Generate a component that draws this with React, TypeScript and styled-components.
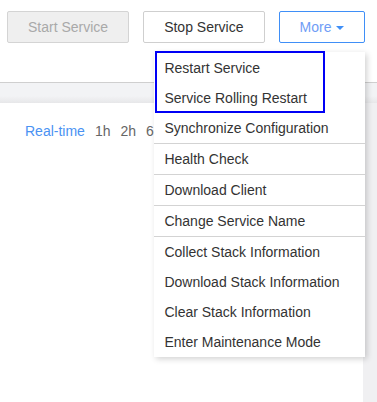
import React from "react";
import styled, { createGlobalStyle } from "styled-components";

const GlobalStyle = createGlobalStyle`
  html, body {
    margin: 0;
    padding: 0;
    background: #fff;
    font-family: "Liberation Sans", Arial, sans-serif;
    font-size: 14px;
    color: #333;
  }
  #root { height: 402px; }
`;

const menuItems: { label: string; divider?: boolean }[] = [
  { label: "Restart Service" },
  { label: "Service Rolling Restart" },
  { label: "Synchronize Configuration", divider: true },
  { label: "Health Check", divider: true },
  { label: "Download Client", divider: true },
  { label: "Change Service Name", divider: true },
  { label: "Collect Stack Information" },
  { label: "Download Stack Information" },
  { label: "Clear Stack Information" },
  { label: "Enter Maintenance Mode" },
];

const ranges = ["1h", "2h", "6h"];

export default function App() {
  return (
    <Page>
      <GlobalStyle />
      <Toolbar>
        <Button disabled>Start Service</Button>
        <Button>Stop Service</Button>
        <MoreWrap>
          <Button $primary>
            More
            <Caret />
          </Button>
          <Menu>
            <Highlight />
            {menuItems.map((item) => (
              <MenuItem key={item.label} $divider={item.divider}>
                {item.label}
              </MenuItem>
            ))}
          </Menu>
        </MoreWrap>
      </Toolbar>
      <Body>
        <Panel>
          <TimeRow>
            <TimeLink $active>Real-time</TimeLink>
            {ranges.map((r) => (
              <TimeLink key={r}>{r}</TimeLink>
            ))}
          </TimeRow>
        </Panel>
      </Body>
    </Page>
  );
}

const Page = styled.div`
  height: 402px;
  display: flex;
  flex-direction: column;
  overflow: hidden;
`;

const Toolbar = styled.div`
  height: 82px;
  box-sizing: border-box;
  padding: 11px 7px 0;
  display: flex;
  align-items: flex-start;
  gap: 14px;
  position: relative;
  z-index: 2;
`;

const Button = styled.button<{ $primary?: boolean }>`
  height: 32px;
  box-sizing: border-box;
  padding: 0 20px;
  display: flex;
  align-items: center;
  gap: 5px;
  font-family: "Liberation Sans", Arial, sans-serif;
  font-size: 14px;
  background: #fff;
  color: ${(p) => (p.$primary ? "#6f9df6" : "#333")};
  border: 1px solid ${(p) => (p.$primary ? "#3f8ff7" : "#cfcfcf")};
  border-radius: 2px;
  cursor: pointer;
  &:disabled {
    background: #efefef;
    color: #a9a9a9;
    border-color: #d4d4d4;
    cursor: not-allowed;
  }
`;

const Caret = styled.span`
  width: 0;
  height: 0;
  border-left: 4px solid transparent;
  border-right: 4px solid transparent;
  border-top: 4px solid #3f8ff7;
  margin-top: 2px;
`;

const MoreWrap = styled.div`
  position: relative;
`;

const Menu = styled.div`
  position: absolute;
  top: 41px;
  right: 0;
  width: 211px;
  background: #fff;
  box-shadow: 2px 2px 6px rgba(0, 0, 0, 0.18);
  padding: 1px 0 0;
`;

const Highlight = styled.div`
  position: absolute;
  left: 1px;
  top: -1px;
  width: 170px;
  height: 62px;
  box-sizing: border-box;
  border: 2px solid #0000f5;
  pointer-events: none;
`;

const MenuItem = styled.div<{ $divider?: boolean }>`
  height: 30px;
  line-height: 30px;
  padding-left: 10px;
  white-space: nowrap;
  color: #333;
  border-bottom: ${(p) => (p.$divider ? "1px solid #d3d3d3" : "none")};
`;

const Body = styled.div`
  flex: 1;
  display: flex;
  flex-direction: column;
  border-top: 1px solid #cfcfcf;
  padding: 20px 14px 0 0;
  background: linear-gradient(
    #f2f3f5 0,
    #f2f3f5 13px,
    #e7e7e9 20px,
    #f0f0f2 20px
  );
`;

const Panel = styled.div`
  flex: 1;
  background: #fff;
  padding: 18px 0 0 25px;
`;

const TimeRow = styled.div`
  display: flex;
  gap: 10px;
  line-height: 20px;
`;

const TimeLink = styled.span<{ $active?: boolean }>`
  color: ${(p) => (p.$active ? "#4a92f3" : "#666")};
  cursor: pointer;
`;
